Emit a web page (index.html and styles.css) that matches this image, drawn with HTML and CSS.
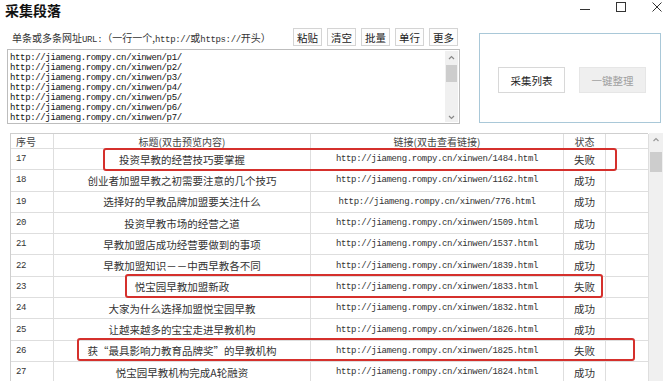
FILE: index.html
```html
<!DOCTYPE html>
<html lang="zh-CN">
<head>
  <meta charset="UTF-8" />
  <title>采集段落</title>
  <link rel="stylesheet" href="styles.css">
</head>
<body>
  <div class="window">
    <div class="titlebar">
      <h1>采集段落</h1>
      <div class="controls">
        <svg width="12" height="12" viewBox="0 0 12 12"><path d="M1 8.5h10" stroke="#333" stroke-width="1"/></svg>
        <svg width="12" height="12" viewBox="0 0 12 12"><rect x="1.5" y="1.5" width="9" height="9" fill="none" stroke="#333" stroke-width="1"/></svg>
        <svg width="12" height="12" viewBox="0 0 12 12"><path d="M1.5 1.5l9 9M10.5 1.5l-9 9" stroke="#333" stroke-width="1"/></svg>
      </div>
    </div>

    <div class="top">
      <div class="input-area">
        <div class="toolbar">
          <span class="label">单条或多条网址<span class="mono">URL:</span>（一行一个,<span class="mono">http://</span>或<span class="mono">https://</span>开头）</span>
          <div class="tools">
            <button class="tool">粘贴</button>
            <button class="tool">清空</button>
            <button class="tool">批量</button>
            <button class="tool">单行</button>
            <button class="tool">更多</button>
          </div>
        </div>
        <div class="urlbox">
          <div class="urls mono">
            <div>http://jiameng.rompy.cn/xinwen/p1/</div>
            <div>http://jiameng.rompy.cn/xinwen/p2/</div>
            <div>http://jiameng.rompy.cn/xinwen/p3/</div>
            <div>http://jiameng.rompy.cn/xinwen/p4/</div>
            <div>http://jiameng.rompy.cn/xinwen/p5/</div>
            <div>http://jiameng.rompy.cn/xinwen/p6/</div>
            <div>http://jiameng.rompy.cn/xinwen/p7/</div>
          </div>
          <div class="vscroll small">
            <svg class="arrow" width="13" height="10" viewBox="0 0 13 10"><path d="M4 6l2.5-2.5L9 6" fill="none" stroke="#888" stroke-width="1.2"/></svg>
            <div class="thumb"></div>
            <div class="track"></div>
            <svg class="arrow" width="13" height="10" viewBox="0 0 13 10"><path d="M4 4l2.5 2.5L9 4" fill="none" stroke="#888" stroke-width="1.2"/></svg>
          </div>
        </div>
      </div>

      <div class="panel">
        <button class="big">采集列表</button>
        <button class="big disabled">一键整理</button>
      </div>
    </div>

    <div class="list">
      <div class="grid">
        <div class="cell head left">序号</div>
        <div class="cell head">标题(双击预览内容)</div>
        <div class="cell head">链接(双击查看链接)</div>
        <div class="cell head">状态</div>
        <div class="cell head"></div>

        <div class="cell num mono">17</div><div class="cell">投资早教的经营技巧要掌握</div><div class="cell mono">http://jiameng.rompy.cn/xinwen/1484.html</div><div class="cell">失败</div><div class="cell"></div>
        <div class="cell num mono">18</div><div class="cell">创业者加盟早教之初需要注意的几个技巧</div><div class="cell mono">http://jiameng.rompy.cn/xinwen/1162.html</div><div class="cell">成功</div><div class="cell"></div>
        <div class="cell num mono">19</div><div class="cell">选择好的早教品牌加盟要关注什么</div><div class="cell mono">http://jiameng.rompy.cn/xinwen/776.html</div><div class="cell">成功</div><div class="cell"></div>
        <div class="cell num mono">20</div><div class="cell">投资早教市场的经营之道</div><div class="cell mono">http://jiameng.rompy.cn/xinwen/1509.html</div><div class="cell">成功</div><div class="cell"></div>
        <div class="cell num mono">21</div><div class="cell">早教加盟店成功经营要做到的事项</div><div class="cell mono">http://jiameng.rompy.cn/xinwen/1537.html</div><div class="cell">成功</div><div class="cell"></div>
        <div class="cell num mono">22</div><div class="cell">早教加盟知识－－中西早教各不同</div><div class="cell mono">http://jiameng.rompy.cn/xinwen/1839.html</div><div class="cell">成功</div><div class="cell"></div>
        <div class="cell num mono">23</div><div class="cell">悦宝园早教加盟新政</div><div class="cell mono">http://jiameng.rompy.cn/xinwen/1833.html</div><div class="cell">失败</div><div class="cell"></div>
        <div class="cell num mono">24</div><div class="cell">大家为什么选择加盟悦宝园早教</div><div class="cell mono">http://jiameng.rompy.cn/xinwen/1832.html</div><div class="cell">成功</div><div class="cell"></div>
        <div class="cell num mono">25</div><div class="cell">让越来越多的宝宝走进早教机构</div><div class="cell mono">http://jiameng.rompy.cn/xinwen/1826.html</div><div class="cell">成功</div><div class="cell"></div>
        <div class="cell num mono">26</div><div class="cell">获“最具影响力教育品牌奖”的早教机构</div><div class="cell mono">http://jiameng.rompy.cn/xinwen/1825.html</div><div class="cell">失败</div><div class="cell"></div>
        <div class="cell num mono">27</div><div class="cell">悦宝园早教机构完成A轮融资</div><div class="cell mono">http://jiameng.rompy.cn/xinwen/1824.html</div><div class="cell">成功</div><div class="cell"></div>
      </div>

      <!-- highlighted failures -->
      <div class="mark mark-1"></div>
      <div class="mark mark-2"></div>
      <div class="mark mark-3"></div>

      <div class="vscroll big-scroll">
        <svg class="arrow" width="14" height="14" viewBox="0 0 14 14"><path d="M4.5 8l2.5-2.5L9.5 8" fill="none" stroke="#999" stroke-width="1.2"/></svg>
        <div class="thumb"></div>
        <div class="track"></div>
      </div>
    </div>
  </div>
</body>
</html>
```
FILE: styles.css
```css
* {
  box-sizing: border-box;
}

body {
  margin: 0;
  background: #fff;
  font-family: "Noto Sans CJK SC", "Noto Sans", sans-serif;
  color: #333;
  font-size: 10.5px;
  overflow: hidden;
}

.window {
  width: 665px;
  height: 381px;
  overflow: hidden;
}

.mono {
  font-family: "Liberation Mono", "DejaVu Sans Mono", monospace;
  font-size: 9px;
  letter-spacing: -0.35px;
}

.titlebar {
  display: flex;
  justify-content: space-between;
  height: 28px;
  padding-left: 5px;
}

.titlebar h1 {
  margin: 0;
  font-size: 14px;
  line-height: 21px;
  font-weight: bold;
  color: #111;
}

.controls {
  display: flex;
  gap: 24px;
  padding: 0 2px 0 0;
}

.controls svg {
  margin-top: 1px;
}

.top {
  display: flex;
  padding-left: 7px;
}

.input-area {
  width: 453px;
}

.toolbar {
  display: flex;
  align-items: center;
  height: 18px;
}

.label {
  padding-left: 5px;
  font-size: 10px;
  color: #333;
  white-space: nowrap;
}

.label .mono {
  font-size: 9px;
}

.tools {
  display: flex;
  gap: 5px;
  margin-left: auto;
  padding-right: 2px;
}

.tool {
  width: 29px;
  height: 18px;
  padding: 0;
  border: 1px solid #d4d4d4;
  background: #fdfdfd;
  font-family: inherit;
  font-size: 10.5px;
  color: #222;
}

.urlbox {
  display: flex;
  margin-top: 3px;
  height: 75px;
  border: 1px solid #bdbdbd;
  background: #fff;
}

.urls {
  flex: 1;
  padding: 3px 2px;
  line-height: 10px;
  color: #111;
}

.vscroll {
  display: flex;
  flex-direction: column;
  background: #f0f0f0;
}

.vscroll .thumb {
  background: #cdcdcd;
}

.vscroll .track {
  flex: 1;
}

.vscroll.small {
  width: 13px;
  margin: 1px 1px 1px 0;
}

.vscroll.small .arrow {
  height: 10px;
  margin-top: 2px;
}

.vscroll.small .thumb {
  height: 17px;
  margin-top: 2px;
  margin-left: 1px;
  margin-right: 1px;
}

.panel {
  display: flex;
  align-items: center;
  gap: 14px;
  width: 182px;
  height: 90px;
  margin-top: 5px;
  margin-left: 19px;
  padding: 4px 0 0 18px;
  border: 1px solid #a9c8d8;
}

.big {
  width: 67px;
  height: 26px;
  padding: 0;
  border: 1px solid #d8d8d8;
  background: #fff;
  font-family: inherit;
  font-size: 10.5px;
  color: #222;
}

.big.disabled {
  background: #efefef;
  border-color: #e6e6e6;
  color: #a0a0a0;
}

.list {
  position: relative;
  display: flex;
  margin: 9px 0 0 10px;
}

.grid {
  display: grid;
  grid-template-columns: 43px 257px 253px 42px 43px;
  grid-template-rows: 15px;
  grid-auto-rows: 21.3px;
  width: 638px;
  border-top: 1px solid #cfcfcf;
  border-left: 1px solid #cfcfcf;
}

.cell {
  display: flex;
  align-items: center;
  justify-content: center;
  border-right: 1px solid #dedede;
  border-bottom: 1px solid #dedede;
  white-space: nowrap;
  overflow: hidden;
  color: #333;
}

.cell.head {
  font-size: 10px;
  color: #444;
}

.cell.head.left,
.cell.num {
  justify-content: flex-start;
  padding-left: 5px;
}

.mark {
  position: absolute;
  border: 2px solid #d5302c;
  border-radius: 3px;
}

.mark-1 {
  left: 93px;
  top: 15px;
  width: 514px;
  height: 23px;
}

.mark-2 {
  left: 115px;
  top: 141px;
  width: 478px;
  height: 24px;
}

.mark-3 {
  left: 67px;
  top: 205px;
  width: 558px;
  height: 23px;
}

.big-scroll {
  width: 14px;
  height: 250px;
  margin-left: 1px;
}

.big-scroll .arrow {
  height: 14px;
}

.big-scroll .thumb {
  height: 20px;
  margin: 5px 1px 0;
}
```
